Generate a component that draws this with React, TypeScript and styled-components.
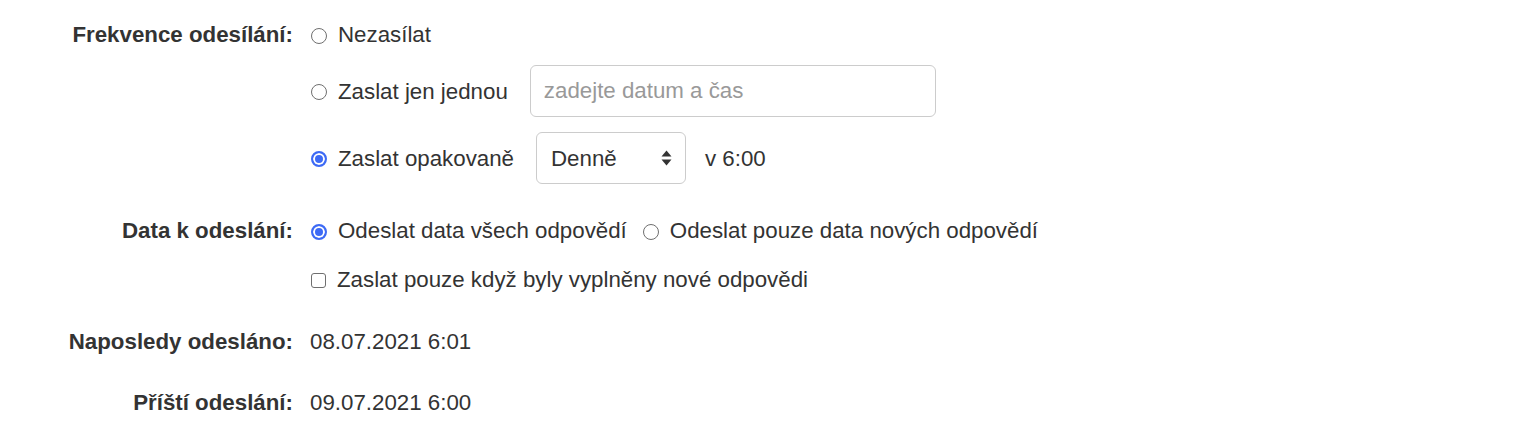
import styled, { createGlobalStyle } from "styled-components";

const GlobalStyle = createGlobalStyle`
  body {
    margin: 0;
    background: #fff;
    font-family: "Liberation Sans", Arial, sans-serif;
    font-size: 22.3px;
    color: #333;
  }
`;

const Form = styled.form`
  padding-top: 19px;
`;

const FormGroup = styled.div<{ $mb: number }>`
  display: grid;
  grid-template-columns: 293px 1fr;
  column-gap: 17px;
  margin-bottom: ${(p) => p.$mb}px;
`;

const GroupLabel = styled.div`
  font-weight: bold;
  text-align: right;
  line-height: 31px;
`;

const Controls = styled.div<{ $gap: number }>`
  display: flex;
  flex-direction: column;
  align-items: flex-start;
  gap: ${(p) => p.$gap}px;
`;

const OptionRow = styled.div<{ $gap?: number }>`
  display: flex;
  align-items: center;
  gap: ${(p) => p.$gap ?? 0}px;
`;

const Choice = styled.label`
  display: flex;
  align-items: center;
  gap: 11px;
  line-height: 31px;
  white-space: nowrap;
  cursor: pointer;
`;

const Radio = styled.input.attrs({ type: "radio" })`
  appearance: none;
  flex-shrink: 0;
  box-sizing: border-box;
  width: 16px;
  height: 16px;
  margin: 2px 0 0 1px;
  border: 1px solid #6f6f6f;
  border-radius: 50%;
  background: #fff;
  &:checked {
    border: 2px solid #3d6af5;
    background: #3d6af5;
    box-shadow: inset 0 0 0 2px #fff;
  }
`;

const Checkbox = styled.input.attrs({ type: "checkbox" })`
  appearance: none;
  flex-shrink: 0;
  box-sizing: border-box;
  width: 15px;
  height: 15px;
  margin: 2px 0 0 1px;
  border: 1px solid #6f6f6f;
  border-radius: 3px;
  background: #fff;
`;

const TextInput = styled.input`
  box-sizing: border-box;
  width: 406px;
  height: 52px;
  margin-left: 22px;
  padding: 0 13px;
  border: 1px solid #ccc;
  border-radius: 6px;
  font: inherit;
  color: #333;
  &::placeholder {
    color: #999;
  }
`;

const SelectWrap = styled.div`
  position: relative;
  margin-left: 22px;
`;

const Select = styled.select`
  appearance: none;
  box-sizing: border-box;
  width: 150px;
  height: 52px;
  padding: 0 14px;
  border: 1px solid #ccc;
  border-radius: 6px;
  background: #fff;
  font: inherit;
  color: #333;
`;

const SelectArrows = styled.svg`
  position: absolute;
  right: 14px;
  top: 18px;
  pointer-events: none;
`;

const Suffix = styled.span`
  margin-left: 19px;
  line-height: 31px;
`;

const StaticValue = styled.div`
  line-height: 31px;
`;

export default function App() {
  return (
    <>
      <GlobalStyle />
      <Form>
        <FormGroup $mb={31}>
          <GroupLabel>Frekvence odesílání:</GroupLabel>
          <Controls $gap={15}>
            <OptionRow>
              <Choice>
                <Radio name="freq" />
                Nezasílat
              </Choice>
            </OptionRow>
            <OptionRow>
              <Choice>
                <Radio name="freq" />
                Zaslat jen jednou
              </Choice>
              <TextInput placeholder="zadejte datum a čas" />
            </OptionRow>
            <OptionRow>
              <Choice>
                <Radio name="freq" defaultChecked />
                Zaslat opakovaně
              </Choice>
              <SelectWrap>
                <Select defaultValue="d">
                  <option value="d">Denně</option>
                  <option value="t">Týdně</option>
                  <option value="m">Měsíčně</option>
                </Select>
                <SelectArrows width="11" height="16" viewBox="0 0 11 16">
                  <path d="M0.5 6.5 L5.5 0.5 L10.5 6.5 Z" fill="#333" />
                  <path d="M0.5 9.5 L10.5 9.5 L5.5 15.5 Z" fill="#333" />
                </SelectArrows>
              </SelectWrap>
              <Suffix>v 6:00</Suffix>
            </OptionRow>
          </Controls>
        </FormGroup>

        <FormGroup $mb={31}>
          <GroupLabel>Data k odeslání:</GroupLabel>
          <Controls $gap={18}>
            <OptionRow $gap={15}>
              <Choice>
                <Radio name="data" defaultChecked />
                Odeslat data všech odpovědí
              </Choice>
              <Choice>
                <Radio name="data" />
                Odeslat pouze data nových odpovědí
              </Choice>
            </OptionRow>
            <OptionRow>
              <Choice>
                <Checkbox />
                Zaslat pouze když byly vyplněny nové odpovědi
              </Choice>
            </OptionRow>
          </Controls>
        </FormGroup>

        <FormGroup $mb={30}>
          <GroupLabel>Naposledy odesláno:</GroupLabel>
          <StaticValue>08.07.2021 6:01</StaticValue>
        </FormGroup>

        <FormGroup $mb={0}>
          <GroupLabel>Příští odeslání:</GroupLabel>
          <StaticValue>09.07.2021 6:00</StaticValue>
        </FormGroup>
      </Form>
    </>
  );
}
